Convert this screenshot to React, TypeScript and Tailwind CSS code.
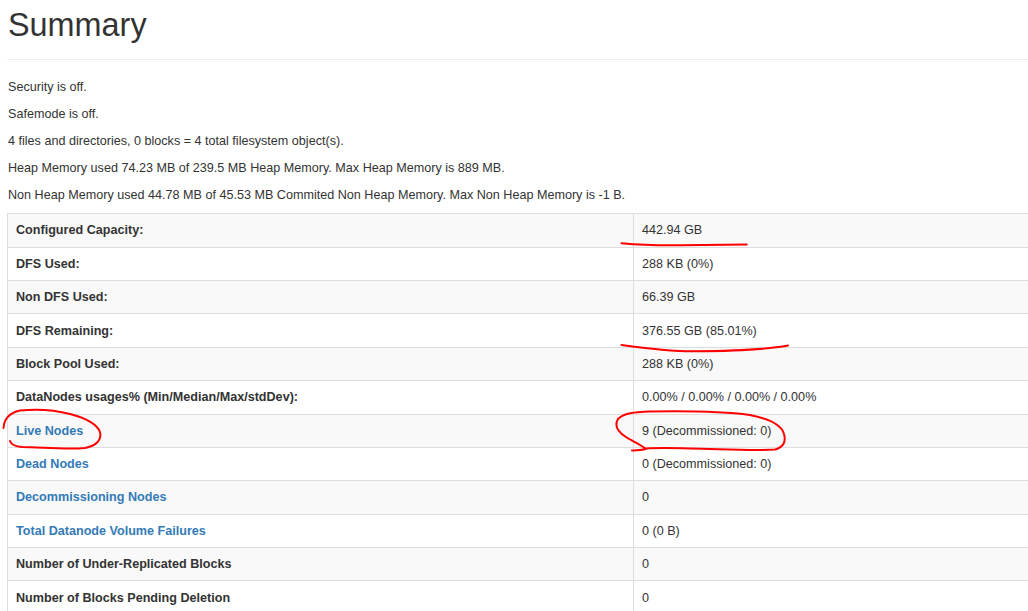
import React from "react";

type Row = { label: string; value: string; link?: boolean };

const rows: Row[] = [
  { label: "Configured Capacity:", value: "442.94 GB" },
  { label: "DFS Used:", value: "288 KB (0%)" },
  { label: "Non DFS Used:", value: "66.39 GB" },
  { label: "DFS Remaining:", value: "376.55 GB (85.01%)" },
  { label: "Block Pool Used:", value: "288 KB (0%)" },
  { label: "DataNodes usages% (Min/Median/Max/stdDev):", value: "0.00% / 0.00% / 0.00% / 0.00%" },
  { label: "Live Nodes", value: "9 (Decommissioned: 0)", link: true },
  { label: "Dead Nodes", value: "0 (Decommissioned: 0)", link: true },
  { label: "Decommissioning Nodes", value: "0", link: true },
  { label: "Total Datanode Volume Failures", value: "0 (0 B)", link: true },
  { label: "Number of Under-Replicated Blocks", value: "0" },
  { label: "Number of Blocks Pending Deletion", value: "0" },
];

const lines = [
  "Security is off.",
  "Safemode is off.",
  "4 files and directories, 0 blocks = 4 total filesystem object(s).",
  "Heap Memory used 74.23 MB of 239.5 MB Heap Memory. Max Heap Memory is 889 MB.",
  "Non Heap Memory used 44.78 MB of 45.53 MB Commited Non Heap Memory. Max Non Heap Memory is -1 B.",
];

export default function App() {
  return (
    <div
      className="relative w-[1028px] h-[611px] overflow-hidden bg-white text-[#333] text-[12.6px] leading-[18px]"
      style={{ fontFamily: '"Liberation Sans", Arial, Helvetica, sans-serif' }}
    >
      <div className="pl-[7px]">
        <div className="border-b border-[#eee] pb-[8px] mb-[18.7px] mr-[-20px]">
          <h1 className="text-[32.4px] leading-[35.6px] font-normal mt-[8px] mb-[7px] pl-px">Summary</h1>
        </div>
        {lines.map((l) => (
          <p key={l} className="mb-[9px] pl-px">
            {l}
          </p>
        ))}
        <table className="border-collapse table-fixed w-[1060px] border border-[#ddd]">
          <colgroup>
            <col className="w-[626px]" />
            <col />
          </colgroup>
          <tbody>
            {rows.map((r, i) => (
              <tr key={r.label} className={i % 2 === 0 ? "bg-[#f9f9f9]" : "bg-white"}>
                <th className="text-left font-bold border border-[#ddd] px-[8px] py-[7.2px] leading-[18px]">
                  {r.link ? <a className="text-[#337ab7] no-underline">{r.label}</a> : r.label}
                </th>
                <td className="border border-[#ddd] px-[8px] py-[7.2px] leading-[18px]">{r.value}</td>
              </tr>
            ))}
          </tbody>
        </table>
      </div>
      <svg
        className="absolute left-0 top-0 pointer-events-none"
        width="1028"
        height="611"
        viewBox="0 0 1028 611"
        fill="none"
        stroke="#ff0000"
        strokeWidth="2"
        strokeLinecap="round"
        strokeLinejoin="round"
      >
        <path d="M621.5 243.3 C 640 245, 660 245.5, 680 245.3 C 705 245, 730 244.5, 746.7 244.5" />
        <path d="M621.5 345 C 650 349, 675 351.5, 695 351.3 C 730 351, 770 349, 788 345.5" />
        <path d="M3.5 428 C 4 420, 9 413, 20 410.5 C 35 409, 55 410, 70 414 C 85 418, 97 424, 100 432 C 102 440, 96 446, 85 448 C 65 450, 40 447, 22 447 C 15 446.5, 11 444, 10 441" />
        <path d="M632 450.5 C 638 450, 643 450, 646 449 C 640 444, 632 441, 626 437 C 618 432, 614 426, 618 419 C 623 413, 635 412, 650 411.5 C 680 411, 720 411, 750 415 C 770 419, 782 426, 784 434 C 786 441, 784 447, 775 449.5 C 755 451, 720 449, 690 448.5 C 670 448, 655 448, 646 448.5" />
      </svg>
    </div>
  );
}
